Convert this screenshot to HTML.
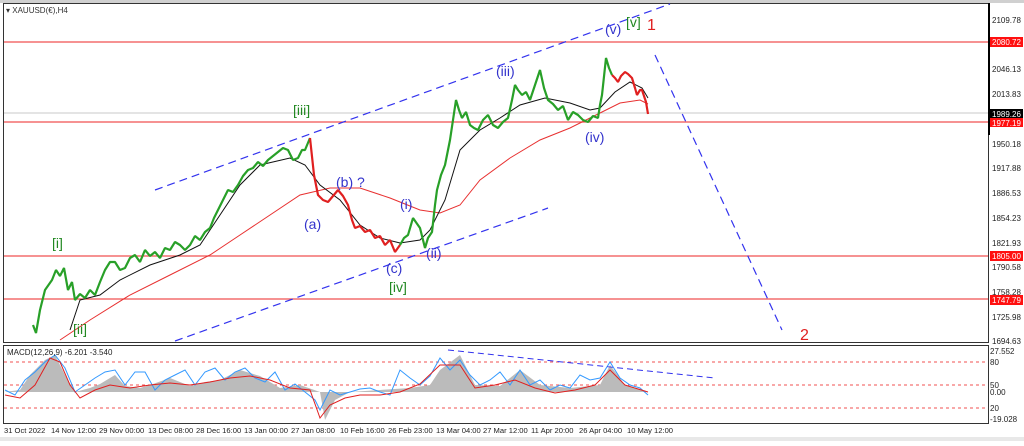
<!DOCTYPE html>
<html><head><meta charset="utf-8"><style>
body{margin:0;background:#fff;width:1024px;height:441px;overflow:hidden;font-family:"Liberation Sans",sans-serif}
svg text{font-family:"Liberation Sans",sans-serif}
</style></head><body>
<svg width="1024" height="441" viewBox="0 0 1024 441" xmlns="http://www.w3.org/2000/svg">
<rect x="0" y="0" width="1024" height="441" fill="#fff"/>
<rect x="0" y="0" width="1024" height="3" fill="#d0d0d0"/>
<rect x="3.5" y="3.5" width="985" height="339" fill="none" stroke="#333" stroke-width="1"/>
<rect x="3.5" y="345.5" width="985" height="78" fill="none" stroke="#333" stroke-width="1"/>
<rect x="988" y="3" width="2" height="132" fill="#000"/>
<text x="6" y="13" font-size="8" fill="#333">▾ XAUUSD(€),H4</text>
<g stroke="#f05050" stroke-width="1.2">
<line x1="4" y1="42" x2="988" y2="42"/><line x1="4" y1="122" x2="988" y2="122"/>
<line x1="4" y1="256" x2="988" y2="256"/><line x1="4" y1="299" x2="988" y2="299"/>
</g>
<line x1="4" y1="113" x2="988" y2="113" stroke="#c8c8c8"/>
<g stroke="#3333ee" stroke-width="1.2" stroke-dasharray="8,5" fill="none">
<line x1="155" y1="190" x2="670" y2="4"/><line x1="175" y1="341" x2="548" y2="208"/>
<line x1="655" y1="55" x2="782" y2="330"/>
</g>
<polyline fill="none" stroke="#e83030" stroke-width="1" points="60,340 90,320 130,295 170,275 210,255 240,235 270,215 300,195 330,188 360,188 390,198 420,210 440,213 460,205 480,180 510,158 540,140 570,128 600,113 620,103 640,100 648,104"/>
<polyline fill="none" stroke="#111" stroke-width="1" points="70,330 80,300 100,295 120,280 150,265 180,255 200,245 220,215 240,185 260,165 290,158 305,165 320,185 340,200 360,225 380,238 400,243 420,240 430,230 445,200 460,150 480,130 500,118 520,105 545,98 570,103 590,110 600,108 615,92 630,82 642,88 648,98"/>
<g fill="none" stroke-width="2.2" stroke-linejoin="bevel">
<polyline stroke="#28a028" points="33,325 36,333 40,310 45,290 52,280 56,270 60,276 64,268 68,290 72,282 75,300 80,294 85,298 90,290 95,295 100,282 105,270 110,262 115,262 120,270 125,268 130,258 135,255 140,262 145,250 150,256 155,252 160,258 165,248 170,250 175,242 180,245 185,250 190,245 195,236 200,240 205,232 210,228 214,218 218,210 223,200 228,190 233,192 238,185 243,176 248,170 253,168 258,162 263,166 268,160 273,156 278,152 283,148 288,150 293,160 298,158 302,150 305,150 310,138"/>
<polyline stroke="#e02020" points="310,138 314,175 318,195 323,200 328,202 333,196 338,190 343,196 348,205 352,220 355,228 360,226 365,232 370,230 375,238 380,236 385,245 390,240 395,252 400,245"/>
<polyline stroke="#28a028" points="400,245 404,238 408,235 413,218 420,228 425,248 428,238 432,232 435,205 437,190 441,175 445,165 450,140 453,120 456,100 459,110 462,118 466,112 470,125 474,128 478,130 483,120 488,115 493,125 498,128 503,122 508,118 512,100 515,85 518,90 522,95 526,92 530,100 535,85 540,70 544,88 548,100 553,104 558,110 563,106 568,120 573,112 578,115 583,120 588,122 593,116 598,118 600,105 602,95 606,58 609,68 612,75"/>
<polyline stroke="#e02020" points="612,75 615,78 618,82 621,76 625,72 628,74 632,78 635,88 637,95 640,90 642,90 644,96 646,102 648,114"/>
</g>
<g font-size="14" fill="#3333cc">
<text x="496" y="76">(iii)</text><text x="605" y="34">(v)</text><text x="585" y="142">(iv)</text>
<text x="336" y="187">(b) ?</text><text x="304" y="229">(a)</text><text x="400" y="209">(i)</text>
<text x="386" y="273">(c)</text><text x="426" y="258">(ii)</text>
</g>
<g font-size="14" fill="#228822">
<text x="293" y="115">[iii]</text><text x="626" y="27">[v]</text><text x="52" y="248">[i]</text>
<text x="73" y="334">[ii]</text><text x="389" y="292">[iv]</text>
</g>
<text x="647" y="30" font-size="16" fill="#e02020">1</text>
<text x="800" y="340" font-size="16" fill="#e02020">2</text>
<g font-size="8" fill="#222">
<text x="992" y="23">2109.78</text><text x="992" y="72">2046.13</text><text x="992" y="97">2013.83</text>
<text x="992" y="147">1950.18</text><text x="992" y="171">1917.88</text><text x="992" y="196">1886.53</text>
<text x="992" y="221">1854.23</text><text x="992" y="246">1821.93</text><text x="992" y="270">1790.58</text>
<text x="992" y="295">1758.28</text><text x="992" y="320">1725.98</text><text x="992" y="344">1694.63</text>
<text x="990" y="354">27.552</text><text x="990" y="365">80</text><text x="990" y="388">50</text>
<text x="990" y="395">0.00</text><text x="990" y="411">20</text><text x="990" y="422">-19.028</text>
</g>
<rect x="990" y="37" width="33" height="10" fill="#ff1010"/><text x="992" y="45" font-size="8" fill="#fff">2080.72</text>
<rect x="990" y="109" width="33" height="9" fill="#000"/><text x="992" y="117" font-size="8" fill="#fff">1989.26</text>
<rect x="990" y="118" width="33" height="9" fill="#ff1010"/><text x="992" y="126" font-size="8" fill="#fff">1977.19</text>
<rect x="990" y="251" width="33" height="10" fill="#ff1010"/><text x="992" y="259" font-size="8" fill="#fff">1805.00</text>
<rect x="990" y="295" width="33" height="10" fill="#ff1010"/><text x="992" y="303" font-size="8" fill="#fff">1747.79</text>
<g stroke="#f05050" stroke-dasharray="3,3"><line x1="4" y1="362" x2="988" y2="362"/><line x1="4" y1="385" x2="988" y2="385"/><line x1="4" y1="408" x2="988" y2="408"/></g>
<polygon fill="#bbb" points="4,392 20,390 30,375 45,360 55,355 65,375 75,392 90,388 100,384 115,375 125,386 140,388 150,385 170,378 190,386 205,382 220,380 240,370 260,376 280,388 300,385 320,392 325,420 335,400 350,392 380,390 410,388 430,385 440,370 460,355 475,385 500,386 520,370 540,385 570,388 600,385 610,365 625,385 648,392 4,392"/>
<polyline fill="none" stroke="#3399ff" stroke-width="1" points="5,390 15,395 25,380 35,372 45,362 55,355 65,368 75,392 85,385 95,378 105,372 115,370 125,385 135,372 145,372 155,390 165,380 175,375 185,370 195,385 205,372 215,368 225,380 235,372 245,368 255,378 265,382 275,372 285,390 295,384 305,392 315,400 320,410 330,390 340,395 350,392 360,389 370,388 380,392 390,395 400,370 410,378 420,385 430,376 440,358 450,370 460,360 470,375 480,385 490,380 500,372 510,385 520,370 530,385 540,380 550,390 560,385 570,388 580,375 590,380 600,378 610,362 620,378 630,385 640,388 648,395"/>
<polyline fill="none" stroke="#e02020" stroke-width="1" points="5,395 20,398 35,385 50,358 60,362 70,385 80,398 95,390 110,385 130,388 150,385 170,383 190,385 210,382 230,378 250,376 270,380 290,388 310,390 320,418 330,405 345,398 360,395 380,395 400,392 420,384 440,365 460,365 475,388 495,385 515,380 535,388 555,393 575,390 595,385 610,370 625,385 648,392"/>
<polyline fill="none" stroke="#3333ee" stroke-dasharray="6,4" points="448,350 715,378"/>
<text x="7" y="355" font-size="8" fill="#222">MACD(12,26,9) -6.201 -3.540</text>
<g font-size="7.6" fill="#222">
<text x="4" y="433">31 Oct 2022</text><text x="51" y="433">14 Nov 12:00</text><text x="99" y="433">29 Nov 00:00</text>
<text x="148" y="433">13 Dec 08:00</text><text x="196" y="433">28 Dec 16:00</text><text x="244" y="433">13 Jan 00:00</text>
<text x="291" y="433">27 Jan 08:00</text><text x="340" y="433">10 Feb 16:00</text><text x="388" y="433">26 Feb 23:00</text>
<text x="436" y="433">13 Mar 04:00</text><text x="483" y="433">27 Mar 12:00</text><text x="531" y="433">11 Apr 20:00</text>
<text x="579" y="433">26 Apr 04:00</text><text x="627" y="433">10 May 12:00</text>
</g>
<rect x="0" y="437" width="1024" height="4" fill="#e8e8e8"/>
</svg>
</body></html>
